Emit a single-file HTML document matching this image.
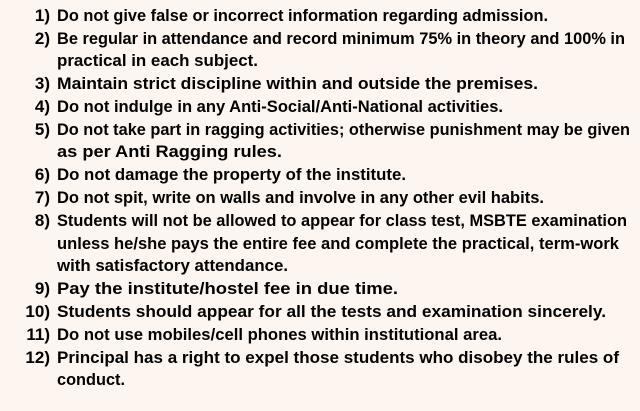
<!DOCTYPE html>
<html><head><meta charset="utf-8"><style>
html,body{margin:0;padding:0;background:#fdf5f0;}
svg{display:block}
text{font-family:"Liberation Sans",Arial,sans-serif;font-weight:bold;font-size:17px;fill:#000}
</style></head><body>
<svg width="640" height="411" xmlns="http://www.w3.org/2000/svg">
<rect width="640" height="411" fill="#fdf5f0"/>
<g text-anchor="end">
<text x="50" y="21">1)</text>
<text x="50" y="44">2)</text>
<text x="50" y="89">3)</text>
<text x="50" y="112">4)</text>
<text x="50" y="135">5)</text>
<text x="50" y="180">6)</text>
<text x="50" y="203">7)</text>
<text x="50" y="226">8)</text>
<text x="50" y="294">9)</text>
<text x="50" y="317">10)</text>
<text x="50" y="340">11)</text>
<text x="50" y="363">12)</text>
</g>
<g>
<text x="57" y="21" textLength="491" lengthAdjust="spacingAndGlyphs">Do not give false or incorrect information regarding admission.</text>
<text x="57" y="44" textLength="568" lengthAdjust="spacingAndGlyphs">Be regular in attendance and record minimum 75% in theory and 100% in</text>
<text x="57" y="66" textLength="201" lengthAdjust="spacingAndGlyphs">practical in each subject.</text>
<text x="57" y="89" textLength="481" lengthAdjust="spacingAndGlyphs">Maintain strict discipline within and outside the premises.</text>
<text x="57" y="112" textLength="446" lengthAdjust="spacingAndGlyphs">Do not indulge in any Anti-Social/Anti-National activities.</text>
<text x="57" y="135" textLength="573" lengthAdjust="spacingAndGlyphs">Do not take part in ragging activities; otherwise punishment may be given</text>
<text x="57" y="157" textLength="225" lengthAdjust="spacingAndGlyphs">as per Anti Ragging rules.</text>
<text x="57" y="180" textLength="349" lengthAdjust="spacingAndGlyphs">Do not damage the property of the institute.</text>
<text x="57" y="203" textLength="487" lengthAdjust="spacingAndGlyphs">Do not spit, write on walls and involve in any other evil habits.</text>
<text x="57" y="226" textLength="570" lengthAdjust="spacingAndGlyphs">Students will not be allowed to appear for class test, MSBTE examination</text>
<text x="57" y="249" textLength="562" lengthAdjust="spacingAndGlyphs">unless he/she pays the entire fee and complete the practical, term-work</text>
<text x="57" y="271" textLength="231" lengthAdjust="spacingAndGlyphs">with satisfactory attendance.</text>
<text x="57" y="294" textLength="341" lengthAdjust="spacingAndGlyphs">Pay the institute/hostel fee in due time.</text>
<text x="57" y="317" textLength="549" lengthAdjust="spacingAndGlyphs">Students should appear for all the tests and examination sincerely.</text>
<text x="57" y="340" textLength="445" lengthAdjust="spacingAndGlyphs">Do not use mobiles/cell phones within institutional area.</text>
<text x="57" y="363" textLength="562" lengthAdjust="spacingAndGlyphs">Principal has a right to expel those students who disobey the rules of</text>
<text x="57" y="385" textLength="68" lengthAdjust="spacingAndGlyphs">conduct.</text>
</g>
</svg>
</body></html>
